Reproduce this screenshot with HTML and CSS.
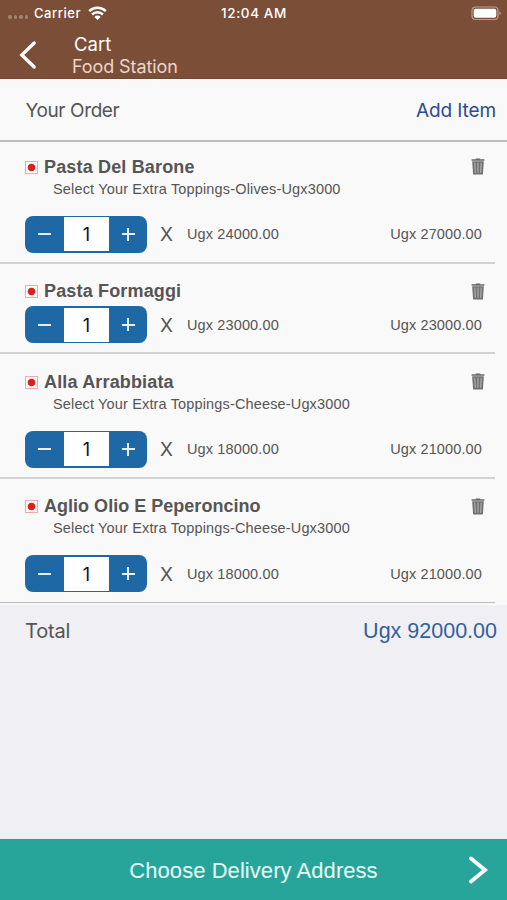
FILE: index.html
```html
<!DOCTYPE html>
<html lang="en">
<head>
<meta charset="utf-8">
<title>Cart</title>
<link rel="stylesheet" href="styles.css">
</head>
<body>
<svg width="0" height="0" class="defs" aria-hidden="true">
  <symbol id="trash" viewBox="0 0 14 17">
    <path d="M4.8 1.3V.6h4.4v.7H13.4v1.5H.6V1.3z" fill="#686868"/>
    <path d="M1.2 3.2h11.6l-.9 13.2H2.1z" fill="#707070"/>
    <path d="M3.8 4.6l.5 10.2M7 4.6v10.2M10.2 4.6l-.5 10.2" stroke="#c4c4c4" stroke-width=".9" fill="none"/>
  </symbol>
</svg>
<div class="screen">
  <header class="header">
    <div class="status">
      <div class="carrier">
        <span class="signal"><i></i><i></i><i></i><i></i></span>
        <span class="carrier-name">Carrier</span>
        <svg class="wifi" width="19" height="14" viewBox="0 0 19 14"><path d="M1.2 5.1a11.9 11.9 0 0 1 16.6 0M4.1 8.5a7.7 7.7 0 0 1 10.8 0" fill="none" stroke="#fff" stroke-width="2.5"/><path d="M9.5 14L6.4 10.9a4.3 4.3 0 0 1 6.2 0z" fill="#fff"/></svg>
      </div>
      <span class="time">12:04 AM</span>
      <svg class="battery" width="31" height="15" viewBox="0 0 31 15"><rect x="1" y="1" width="26" height="12.5" rx="3.5" fill="none" stroke="#b99d8e" stroke-width="1.2"/><rect x="2.7" y="2.8" width="22.6" height="9" rx="2" fill="#fff"/><path d="M28.3 5.2q3 2 0 4z" fill="#b99d8e"/></svg>
    </div>
    <div class="nav">
      <svg class="back" width="18" height="30" viewBox="0 0 18 30"><path d="M15.2 3L2.8 15 15.2 27" fill="none" stroke="#fff" stroke-width="3.3" stroke-linecap="round"/></svg>
      <div class="titles"><h1 class="title">Cart</h1><div class="subtitle">Food Station</div></div>
    </div>
  </header>
  <div class="order-bar"><span class="order-label">Your Order</span><a class="add">Add Item</a></div>
  <main class="items">
    <section class="item">
      <div class="name-row"><span class="mark"></span><h2 class="name">Pasta Del Barone</h2><svg class="trash"><use href="#trash"/></svg></div>
      <div class="extra olives">Select Your Extra Toppings-Olives-Ugx3000</div>
      <div class="qty-row"><div class="stepper"><span class="minus"></span><span class="count">1</span><span class="plus"></span></div><span class="times">X</span><span class="price">Ugx 24000.00</span><span class="price sum">Ugx 27000.00</span></div>
    </section>
    <section class="item compact">
      <div class="name-row"><span class="mark"></span><h2 class="name">Pasta Formaggi</h2><svg class="trash"><use href="#trash"/></svg></div>
      <div class="qty-row"><div class="stepper"><span class="minus"></span><span class="count">1</span><span class="plus"></span></div><span class="times">X</span><span class="price">Ugx 23000.00</span><span class="price sum">Ugx 23000.00</span></div>
    </section>
    <section class="item">
      <div class="name-row"><span class="mark"></span><h2 class="name">Alla Arrabbiata</h2><svg class="trash"><use href="#trash"/></svg></div>
      <div class="extra">Select Your Extra Toppings-Cheese-Ugx3000</div>
      <div class="qty-row"><div class="stepper"><span class="minus"></span><span class="count">1</span><span class="plus"></span></div><span class="times">X</span><span class="price">Ugx 18000.00</span><span class="price sum">Ugx 21000.00</span></div>
    </section>
    <section class="item last">
      <div class="name-row"><span class="mark"></span><h2 class="name">Aglio Olio E Peperoncino</h2><svg class="trash"><use href="#trash"/></svg></div>
      <div class="extra">Select Your Extra Toppings-Cheese-Ugx3000</div>
      <div class="qty-row"><div class="stepper"><span class="minus"></span><span class="count">1</span><span class="plus"></span></div><span class="times">X</span><span class="price">Ugx 18000.00</span><span class="price sum">Ugx 21000.00</span></div>
    </section>
  </main>
  <div class="total"><span class="total-label">Total</span><span class="total-value">Ugx 92000.00</span></div>
  <footer class="footer"><span class="choose">Choose Delivery Address</span><svg class="next" width="20" height="28" viewBox="0 0 20 28"><path d="M3 2.5L17 14 3 25.5" fill="none" stroke="#fff" stroke-width="3.8" stroke-linecap="round"/></svg></footer>
</div>
</body>
</html>
```
FILE: styles.css
```css
* { box-sizing: border-box; }
body { margin: 0; font-family: "Liberation Sans", Arial, sans-serif; color: #555; }
h1, h2 { margin: 0; font-weight: 400; }
.defs { position: absolute; }
.screen { width: 507px; height: 900px; display: flex; flex-direction: column; background: #efeff4; overflow: hidden; white-space: nowrap; }
.header { height: 79px; flex: none; background: #7b4e38; border-bottom: 1px solid #744630; color: #fff; font-family: Inter, sans-serif; }
.status { height: 26px; display: grid; grid-template-columns: 1fr auto 1fr; align-items: center; padding: 0 5px 0 6px; font-size: 13px; font-weight: 500; }
.carrier { display: flex; align-items: center; padding-left: 2px; }
.signal { display: flex; gap: 2px; width: 26px; padding-top: 8px; }
.signal i { width: 3.5px; height: 3.5px; border-radius: 50%; background: #a38370; }
.carrier-name { width: 54px; letter-spacing: .55px; }
.time { font-size: 13.5px; letter-spacing: .6px; }
.battery { justify-self: end; }
.nav { display: flex; height: 52px; padding-left: 19px; }
.back { margin-top: 14px; }
.titles { padding-left: 35px; }
.title { font-size: 18.5px; line-height: 22px; margin-top: 7px; padding-left: 2px; }
.subtitle { font-size: 18px; line-height: 22px; margin-top: 1px; color: #ecd5c8; letter-spacing: -.1px; }
.order-bar { height: 63px; flex: none; display: flex; justify-content: space-between; align-items: center; padding: 2px 11px 0 25.5px; background: #f9f9f9; border-bottom: 2px solid #bdbdbd; font-size: 19px; font-family: Inter, sans-serif; }
.order-label { letter-spacing: -.4px; }
.add { color: #2b4c92; letter-spacing: -.1px; }
.items { background: #f9f9f9; height: 463px; flex: none; }
.item { width: 495px; height: 124.6px; padding: 16.5px 13px 0 25px; border-bottom: 2px solid #d2d2d2; }
.item:first-child { height: 122px; padding-top: 13.5px; }
.item.compact { height: 90px; padding-top: 16px; }
.item.last { border-bottom: 1px solid #b9b9b9; }
.name-row { display: flex; height: 22px; align-items: center; }
.mark { width: 13px; height: 13px; margin-top: 1px; border: 1px solid #efaaa4; background: radial-gradient(circle, #da201c 3.4px, transparent 4.2px); }
.name { font-size: 18px; font-weight: 700; line-height: 22px; padding-left: 6px; letter-spacing: .16px; }
.last .name { letter-spacing: .02px; }
.trash { width: 14px; height: 17px; margin: 0 -3px 0 auto; }
.extra { font-size: 14.5px; line-height: 22px; padding-left: 28px; height: 20px; letter-spacing: .15px; }
.olives { letter-spacing: .16px; }
.qty-row { display: flex; align-items: center; height: 37px; margin-top: 18px; }
.compact .qty-row { margin-top: 4px; }
.stepper { width: 122px; height: 37px; border-radius: 8px; background: #1e68a6; display: grid; grid-template-columns: 39px 45px 38px; align-items: center; justify-items: center; }
.count { width: 45px; height: 34px; background: #fff; color: #111; font: 18px/36px Inter, sans-serif; text-align: center; }
.minus, .plus { width: 14px; height: 14px; background: linear-gradient(#e5effa, #e5effa) center / 13px 2px no-repeat; }
.plus { background: linear-gradient(#e5effa, #e5effa) center / 13px 2px no-repeat, linear-gradient(#e5effa, #e5effa) center / 2px 13px no-repeat; }
.times { width: 40px; padding: 1px 0 0 13px; font: 19px Inter, sans-serif; }
.price { font-size: 14.5px; letter-spacing: .13px; }
.sum { margin-left: auto; }
.total { height: 52px; display: flex; justify-content: space-between; align-items: center; padding: 0 10px 0 25px; }
.total-label { font: 20px Inter, sans-serif; letter-spacing: -.2px; }
.total-value { font-size: 21.5px; color: #325fa0; }
.footer { margin-top: auto; height: 61px; flex: none; background: #27a59a; color: #e9fffa; display: grid; grid-template-columns: 1fr auto 1fr; align-items: center; font-size: 22px; }
.choose { grid-column: 2; padding-top: 2px; letter-spacing: .06px; }
.next { justify-self: end; margin-right: 19px; }
```
